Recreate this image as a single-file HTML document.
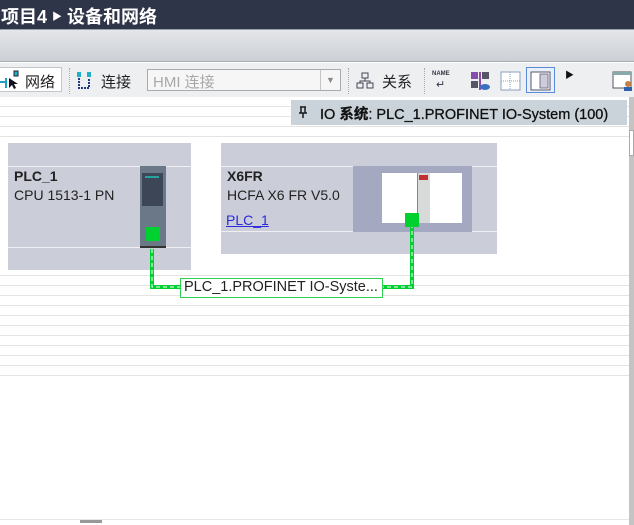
<!DOCTYPE html><html><head><meta charset="utf-8"><style>
*{margin:0;padding:0;box-sizing:border-box}
body{width:634px;height:525px;overflow:hidden;background:#fff;position:relative;font-family:"Liberation Sans","Noto Sans CJK SC",sans-serif}
.a{position:absolute}
.t{font-size:14px;color:#222}
</style></head><body>
<div class="a" style="left:0;top:0;width:634px;height:29px;background:#2f3548"></div>
<div class="a" style="left:1px;top:3px;color:#fff;font-size:18px;font-weight:bold;white-space:nowrap;font-family:'Liberation Sans','Noto Sans CJK SC',sans-serif">项目4 <span style="font-size:10px;vertical-align:3px">▶</span> 设备和网络</div>
<div class="a" style="left:0;top:29px;width:634px;height:33px;background:linear-gradient(#e4e6e9,#ccd0d5);border-top:1px solid #9aa0a8;border-bottom:1px solid #a8acb2"></div>
<div class="a" style="left:0;top:63px;width:634px;height:34px;background:#eeeff1"></div>
<!-- toolbar -->
<div class="a" style="left:-2px;top:67px;width:64px;height:25px;background:#fff;border:1px solid #c4c8cc"></div>
<svg class="a" style="left:0;top:70px" width="22" height="20"><rect x="14" y="1" width="4" height="5" fill="#20b0c8" stroke="#223" stroke-width="1"/><path d="M0 12h6v6M6 12v-4" stroke="#20a0c0" stroke-width="2" fill="none"/><path d="M9 8l0 10 3-3 2 4 2-1-2-4 4 0z" fill="#112"/></svg>
<div class="a t" style="left:25px;top:71px;font-size:15px">网络</div>
<div class="a" style="left:69px;top:68px;height:26px;border-left:1px dotted #aaa"></div>
<svg class="a" style="left:76px;top:71px" width="16" height="20"><rect x="1" y="1" width="4" height="5" fill="#20b0c8"/><rect x="11" y="1" width="4" height="5" fill="#20b0c8"/><path d="M3 7v10h10V7" stroke="#223a80" stroke-width="2" stroke-dasharray="2 1" fill="none"/></svg>
<div class="a t" style="left:101px;top:71px;font-size:15px">连接</div>
<div class="a" style="left:147px;top:69px;width:194px;height:22px;background:#f6f6f6;border:1px solid #a8acb0"></div>
<div class="a" style="left:153px;top:71px;font-size:15px;color:#a8a8a8">HMI 连接</div>
<div class="a" style="left:320px;top:70px;width:20px;height:20px;border-left:1px solid #c4c4c4;color:#888;font-size:9px;text-align:center;line-height:20px">▼</div>
<div class="a" style="left:348px;top:68px;height:26px;border-left:1px dotted #aaa"></div>
<svg class="a" style="left:356px;top:72px" width="18" height="18"><rect x="6" y="1" width="6" height="5" fill="none" stroke="#445"/><rect x="1" y="11" width="6" height="5" fill="none" stroke="#445"/><rect x="11" y="11" width="6" height="5" fill="none" stroke="#445"/><path d="M9 6v3H4v2M9 9h5v2" stroke="#445" fill="none"/></svg>
<div class="a t" style="left:382px;top:71px;font-size:15px">关系</div>
<div class="a" style="left:424px;top:68px;height:26px;border-left:1px dotted #aaa"></div>
<div class="a" style="left:432px;top:71px;font-size:6px;font-weight:bold;color:#334">NAME</div>
<div class="a" style="left:436px;top:78px;font-size:11px;color:#334">↵</div>
<svg class="a" style="left:470px;top:71px" width="22" height="20"><rect x="1" y="1" width="7" height="7" fill="#8a4caa"/><rect x="12" y="1" width="7" height="7" fill="#556"/><rect x="1" y="10" width="7" height="7" fill="#556"/><path d="M10 1v18" stroke="#8a4caa" stroke-width="2"/><ellipse cx="15" cy="16" rx="5" ry="3" fill="#3a70c0"/></svg>
<svg class="a" style="left:500px;top:71px" width="22" height="20"><rect x="1" y="1" width="19" height="18" fill="#fff" stroke="#8aa0c0"/><path d="M1 10h19M10 1v18" stroke="#8aa0c0" stroke-dasharray="1 1"/></svg>
<div class="a" style="left:526px;top:67px;width:29px;height:26px;border:1px solid #5a8ad8;background:#e8f0fc"></div>
<svg class="a" style="left:530px;top:71px" width="22" height="20"><rect x="1" y="1" width="19" height="18" fill="#fff" stroke="#556"/><rect x="10" y="3" width="8" height="14" fill="#ccd" stroke="#778"/></svg>
<div class="a" style="left:565px;top:68px;font-size:9px;color:#111">▶</div>
<svg class="a" style="left:612px;top:70px" width="22" height="22"><rect x="1" y="2" width="18" height="16" fill="#fff" stroke="#556"/><rect x="1" y="2" width="18" height="3" fill="#8aa"/><circle cx="16" cy="14" r="3" fill="#c88040"/><rect x="12" y="17" width="8" height="4" fill="#3060b0"/></svg>
<!-- grid lines -->
<div class="a" style="left:0;top:97px;width:629px;height:48px;background:repeating-linear-gradient(#fff 0 9px,#e4e4e4 9px 10px)"></div>
<div class="a" style="left:0;top:275px;width:629px;height:104px;background:repeating-linear-gradient(#e4e4e4 0 1px,#fff 1px 10px)"></div>
<div class="a" style="left:0;top:519px;width:629px;height:1px;background:#e6e6e6"></div>
<div class="a" style="left:80px;top:520px;width:22px;height:3px;background:#999"></div>
<!-- scrollbar -->
<div class="a" style="left:629px;top:97px;width:5px;height:428px;background:#c4c4c4"></div>
<div class="a" style="left:629px;top:130px;width:5px;height:26px;background:#fff;border:1px solid #aaa"></div>
<!-- tooltip -->
<div class="a" style="left:291px;top:100px;width:336px;height:25px;background:#c9d3d9"></div>
<svg class="a" style="left:298px;top:106px" width="10" height="12"><path d="M2 1h6M3 1v6M7 1v6M1 7h8M5 7v5" stroke="#1a1a1a" stroke-width="1.5" fill="none"/></svg>
<div class="a" style="left:320px;top:103px;font-size:14.5px;color:#111;white-space:nowrap;-webkit-text-stroke:0.3px #111">IO <b>系统</b>: PLC_1.PROFINET IO-System (100)</div>
<!-- PLC -->
<div class="a" style="left:8px;top:143px;width:183px;height:127px;background:#cbcdd8"></div>
<div class="a" style="left:8px;top:166px;width:183px;height:1px;background:#f0f0f4"></div>
<div class="a" style="left:8px;top:247px;width:183px;height:1px;background:#f0f0f4"></div>
<div class="a" style="left:14px;top:168px;font-size:14px;font-weight:bold;color:#222">PLC_1</div>
<div class="a t" style="left:14px;top:187px">CPU 1513-1 PN</div>
<div class="a" style="left:140px;top:166px;width:26px;height:82px;background:#6a7888;border-bottom:2px solid #333"></div>
<div class="a" style="left:142px;top:173px;width:21px;height:33px;background:#3d4656"></div>
<div class="a" style="left:145px;top:176px;width:14px;height:2px;background:#2aa0a0"></div>
<div class="a" style="left:146px;top:227px;width:14px;height:14px;background:#00d030"></div>
<!-- X6FR -->
<div class="a" style="left:221px;top:143px;width:276px;height:111px;background:#cbcdd8"></div>
<div class="a" style="left:221px;top:166px;width:276px;height:1px;background:#f0f0f4"></div>
<div class="a" style="left:221px;top:231px;width:276px;height:1px;background:#f0f0f4"></div>
<div class="a" style="left:227px;top:168px;font-size:14px;font-weight:bold;color:#222">X6FR</div>
<div class="a t" style="left:227px;top:187px">HCFA X6 FR V5.0</div>
<div class="a" style="left:226px;top:212px;font-size:14px;color:#2a2ae0;text-decoration:underline">PLC_1</div>
<div class="a" style="left:353px;top:166px;width:119px;height:66px;background:#a4a8c0"></div>
<div class="a" style="left:382px;top:173px;width:80px;height:50px;background:#fff"></div>
<div class="a" style="left:417px;top:173px;width:13px;height:50px;background:#d8dada;border-left:1px solid #888"></div>
<div class="a" style="left:419px;top:175px;width:9px;height:5px;background:#c03030"></div>
<div class="a" style="left:405px;top:213px;width:14px;height:14px;background:#00d030"></div>
<!-- network line -->
<svg class="a" style="left:0;top:0" width="634" height="525"><path d="M152 249V287H412V227" stroke="#00d030" stroke-width="4" fill="none"/><path d="M152 249V287H412V227" stroke="#fff" stroke-width="1" stroke-dasharray="4 3" fill="none"/></svg>
<div class="a" style="left:180px;top:278px;width:203px;height:20px;background:#fff;border:1px solid #30d050"></div>
<div class="a" style="left:184px;top:279px;font-size:14.5px;color:#222;white-space:nowrap">PLC_1.PROFINET IO-Syste...</div>
</body></html>
